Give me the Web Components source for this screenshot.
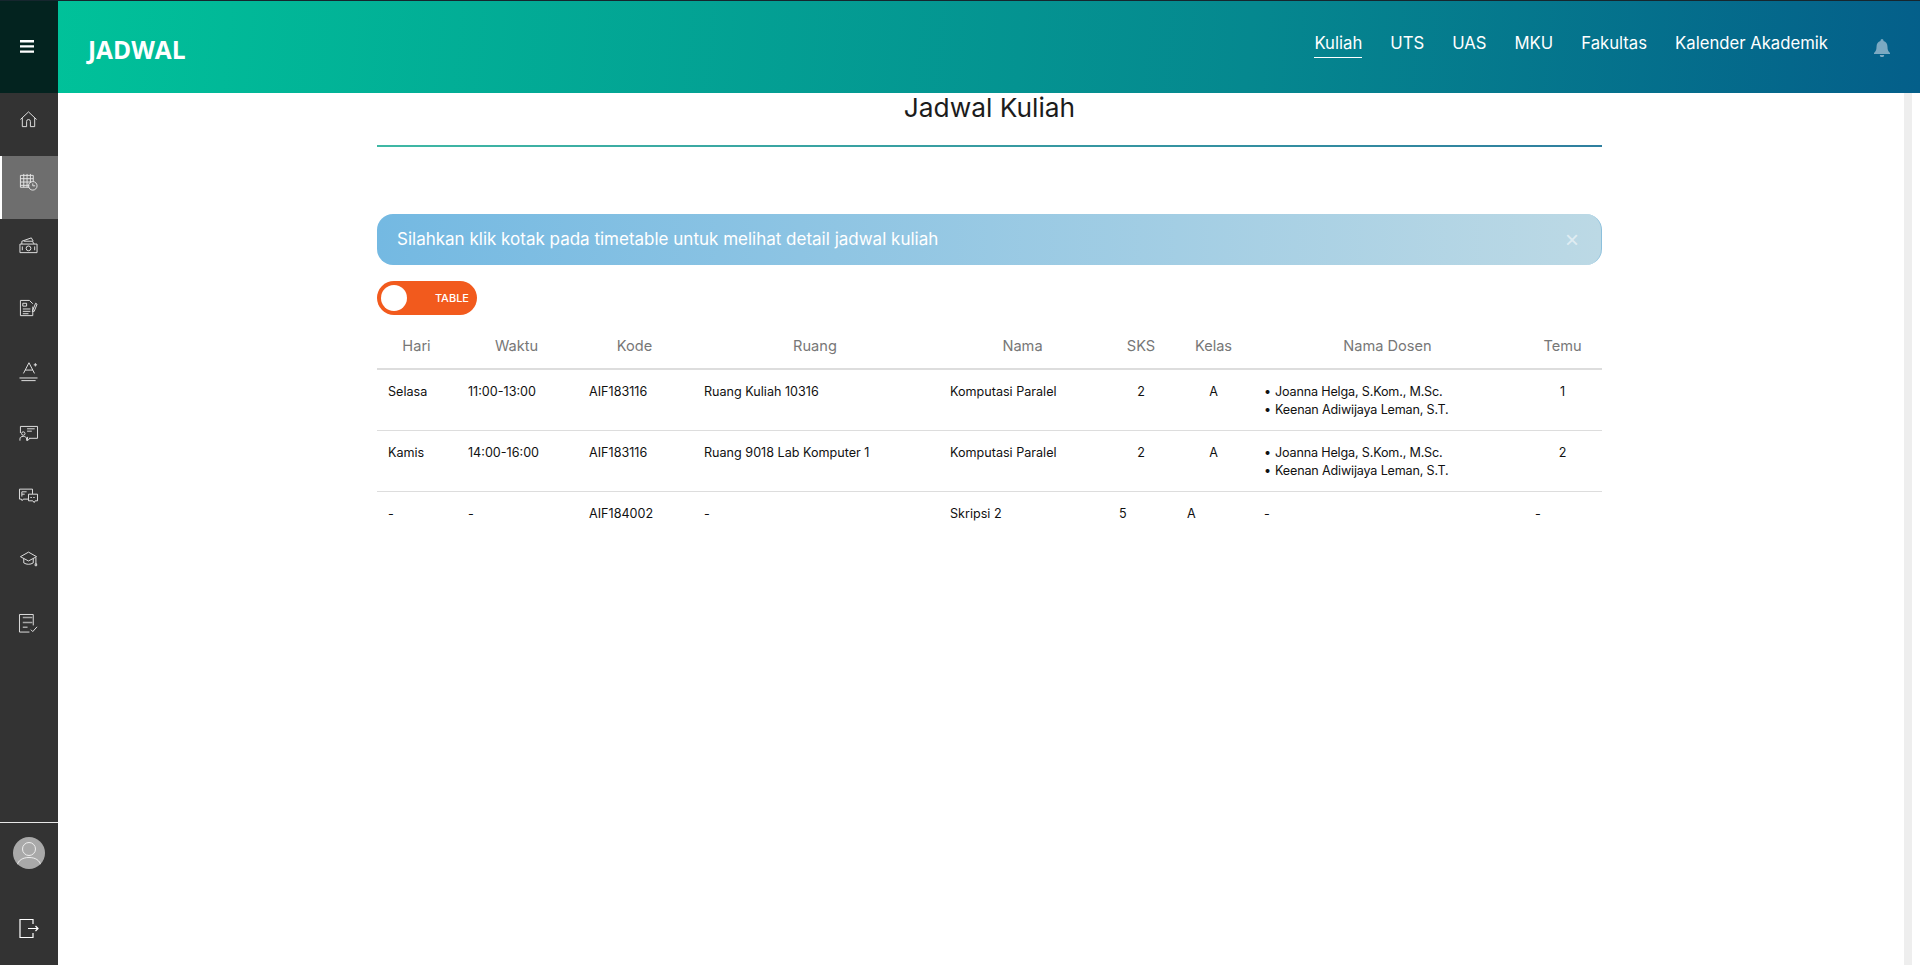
<!DOCTYPE html>
<html lang="id">
<head>
<meta charset="utf-8">
<title>Jadwal</title>
<style>
    html, body { margin: 0; height: 100%; overflow: hidden; background: #fff; }
    body { font-family: Inter, "Liberation Sans", sans-serif; }
</style>
</head>
<body>
<app-shell>
    <top-bar slot="top" heading="JADWAL"></top-bar>
    <side-nav slot="side"></side-nav>
    <page-title>Jadwal Kuliah</page-title>
    <alert-box>Silahkan klik kotak pada timetable untuk melihat detail jadwal kuliah</alert-box>
    <view-toggle>TABLE</view-toggle>
    <schedule-table></schedule-table>
</app-shell>

<script>
// Sidebar icons, all drawn on a 20x20 box
const ICONS = {
    home: '<path d="M1.500 10 10 2l8.500 8"/><path d="M3.500 8.500V17.500H8V12a2 2 0 0 1 4 0v5.500h4.500V8.500"/>',
    schedule: '<path d="M11 15H1.500V2.500H15V9"/><path d="M1.500 6H15M1.500 9.500H13M1.500 13H11M5 1v14M8.500 1v14M12 1v9"/><circle cx="14.500" cy="13.500" r="4.500"/><path d="M14.500 11v2.500h2.500"/>',
    money: '<path d="M1 8.500h18v9H1z"/><path d="M3 8.500V5.500L13 2l2 3.500M5 5.500l9 0 2 3"/><circle cx="10" cy="13" r="2.500"/><path d="M3.500 11v4M16.500 11v4"/>',
    grades: '<path d="M14.500 8v9.500H1.500V1.500H11l3.500 3.500"/><path d="M4 4.500h4v3H4zM4 10.500h8M4 13h8M4 15.500h6"/><path d="M14 13l3.500-8.500 1.500 1-3 7.500z"/>',
    score: '<path d="M4.700 12 10.500 .8 16.300 12M6.500 8.500h8"/><path d="M15.500 3h3.500M17.200 1.200v3.500"/><path d="M.5 16.800h19" stroke-opacity=".7" stroke-width="1.500"/><path d="M2.500 19.600h15"/>',
    teach: '<g transform="translate(0 -1.500)"><path d="M1.500 10V3H19.500V15.500H10.500"/><path d="M8.500 5.500h8M8.500 8h5"/><circle cx="4.500" cy="10.500" r="1.800"/><path d="M1 18v-1.800c0-2 1.500-2.700 3.500-2.700s3.500.7 3.500 2.700V18"/><path d="M9 14v4l2.500-2.500"/></g>',
    chat: '<g transform="translate(0 -2.500)"><path d="M9.500 14.200H4.500l-1.200 1.600-.8-1.600H.5V3.700h13.700v5"/><path d="M3 6.500h5M3 9h3M3 6.500v5"/><path d="M10 9h9.500v7h-2.500l-1 1.800-1.500-1.800H10z"/><path d="M12 12.500h1.500M15 12.500h1.500"/></g>',
    cap: '<g transform="translate(0 -2.500)"><path d="M10 3.700 1.500 8.500 10 13l8.500-4.500z"/><path d="M5 10.500v4.500c3 2 7 2 10 0v-4.500"/><path d="M17.800 9.500V16"/><path d="M17 16h1.600v2H17z"/></g>',
    report: '<path d="M15 12V.5H.5v18.500H11"/><path d="M4 3.700h10M4 9h10M4 14h5" stroke-width="1.600" stroke-opacity=".65"/><path d="M12.500 16.500l2 2 4.500-5"/>',
};

class NavItem extends HTMLElement {
    connectedCallback() {
        this.attachShadow({ mode: 'open' }).innerHTML = `
            <style>
                :host { display: flex; height: 63px; padding: 0 1px 10px 0; align-items: center; justify-content: center; box-sizing: border-box; }
                :host([active]) { background: #6e6e6e; border-left: 2px solid #fff; padding-right: 3px; }
                svg { width: 19px; height: 19px; fill: none; stroke: #e6e6e6; stroke-width: 1; overflow: visible; }
            </style>
            <svg viewBox="0 0 20 20">${ICONS[this.getAttribute('icon')]}</svg>
        `;
    }
}

class SideNav extends HTMLElement {
    connectedCallback() {
        const names = ['home', 'schedule', 'money', 'grades', 'score', 'teach', 'chat', 'cap', 'report'];
        const items = names.map(n => `<nav-item icon="${n}" ${n === 'schedule' ? 'active' : ''}></nav-item>`).join('');
        this.attachShadow({ mode: 'open' }).innerHTML = `
            <style>
                :host { display: flex; flex-direction: column; width: 58px; height: 100%; background: #333; }
                .items { flex: 1; }
                .bottom { border-top: 1px solid #e8e8e8; height: 143px; box-sizing: border-box; display: flex; flex-direction: column; align-items: center; padding-top: 14px; }
                .avatar { width: 32px; height: 32px; border-radius: 50%; background: #a9a9a9; overflow: hidden; }
                .avatar svg { display: block; width: 32px; height: 32px; fill: none; stroke: #eee; stroke-width: 1; }
                .logout { width: 20px; height: 19px; margin-top: 50px; fill: none; stroke: #fff; stroke-width: 1.200; }
            </style>
            <div class="items">${items}</div>
            <div class="bottom">
                <div class="avatar"><svg viewBox="0 0 32 32"><circle cx="16" cy="12" r="6.500"/><path d="M4 29c1-6 6-8.500 12-8.500S27 23 28 29"/></svg></div>
                <svg class="logout" viewBox="0 0 20 19"><path d="M14 5V.5H1v18h13v-4.500"/><path d="M9 9.500h10M16.500 7 19 9.500 16.500 12"/></svg>
            </div>
        `;
    }
}

class TopBar extends HTMLElement {
    connectedCallback() {
        const links = ['Kuliah', 'UTS', 'UAS', 'MKU', 'Fakultas', 'Kalender Akademik'];
        this.attachShadow({ mode: 'open' }).innerHTML = `
            <style>
                :host { display: flex; height: 93px; box-sizing: border-box; border-top: 1px solid #16262e; color: #fff; align-items: stretch;
                    background: linear-gradient(95deg, #00c49a 0%, #05888f 65%, #045f8a 100%); }
                .burger { width: 58px; background: #03231f; display: flex; align-items: center; justify-content: center; padding: 0 4px 2px 0; box-sizing: border-box; margin-right: 30px; }
                .burger svg { width: 14px; height: 13px; fill: #fff; }
                h1 { margin: 0; font: 700 24.500px "Open Sans", sans-serif; align-self: center; margin-top: 5px; flex: 1; }
                nav { display: flex; gap: 28px; align-self: flex-start; margin-top: 31px; font-size: 16.700px; }
                nav a { padding-bottom: 3px; line-height: 22px; border-bottom: 1px solid transparent; }
                nav a.on { border-bottom-color: #fff; }
                .bell { width: 16px; height: 18px; margin: 38px 30px 0 46px; fill: #7ba9c2; align-self: flex-start; }
            </style>
            <div class="burger"><svg viewBox="0 0 14 13"><path d="M0 0h14v2.400H0zM0 5.200h14v2.400H0zM0 10.400h14v2.400H0z"/></svg></div>
            <h1>${this.getAttribute('heading')}</h1>
            <nav>${links.map((l, i) => `<a class="${i === 0 ? 'on' : ''}">${l}</a>`).join('')}</nav>
            <svg class="bell" viewBox="0 0 16 18"><path d="M8 0a1.500 1.500 0 0 1 1.500 1.500v.6C12 2.800 13.500 5 13.500 8c0 3 .8 4.500 2.500 6v1H0v-1c1.700-1.500 2.500-3 2.500-6 0-3 1.500-5.200 4-5.900v-.6A1.500 1.500 0 0 1 8 0zM5.800 16h4.400a2.200 2.200 0 0 1-4.400 0z"/></svg>
        `;
    }
}

class PageTitle extends HTMLElement {
    connectedCallback() {
        this.attachShadow({ mode: 'open' }).innerHTML = `
            <style>
                :host { display: block; height: 51px; padding-top: 1px; border-bottom: 2px solid; border-image: linear-gradient(90deg, #3fb8a4, #2f7f9f) 1; text-align: center; font-size: 26.300px; line-height: 28px; color: #1c1c1c; }
            </style>
            <slot></slot>
        `;
    }
}

class AlertBox extends HTMLElement {
    connectedCallback() {
        this.attachShadow({ mode: 'open' }).innerHTML = `
            <style>
                :host { display: flex; align-items: center; justify-content: space-between; height: 51px; margin-top: 67px; padding: 0 22px 1px 20px; box-sizing: border-box; border-radius: 16px; border-right: 1px solid #8cc0dc;
                    color: #fff; font-size: 17px; background: linear-gradient(90deg, #74b9e2, #bcd9e5); }
                span { color: rgba(255,255,255,.55); font-size: 24px; line-height: 26px; margin-top: 2px; font-family: "Liberation Sans", sans-serif; }
            </style>
            <div><slot></slot></div><span>&times;</span>
        `;
    }
}

class ViewToggle extends HTMLElement {
    connectedCallback() {
        this.attachShadow({ mode: 'open' }).innerHTML = `
            <style>
                :host { display: flex; align-items: center; width: 100px; height: 34px; margin-top: 16px; padding: 0 8px 0 4px; box-sizing: border-box; border-radius: 17px; background: #f25a1d; color: #fff; font-size: 11px; font-weight: 500; }
                i { width: 26px; height: 26px; border-radius: 50%; background: #fff; margin-right: auto; }
            </style>
            <i></i><slot></slot>
        `;
    }
}

class ScheduleTable extends HTMLElement {
    connectedCallback() {
        const widths = [79, 121, 115, 246, 169, 68, 77, 271, 79];
        const heads = ['Hari', 'Waktu', 'Kode', 'Ruang', 'Nama', 'SKS', 'Kelas', 'Nama Dosen', 'Temu'];
        const dosen = '<ul><li>Joanna Helga, S.Kom., M.Sc.</li><li>Keenan Adiwijaya Leman, S.T.</li></ul>';
        const rows = [
            ['Selasa', '11:00-13:00', 'AIF183116', 'Ruang Kuliah 10316', 'Komputasi Paralel', '2', 'A', dosen, '1'],
            ['Kamis', '14:00-16:00', 'AIF183116', 'Ruang 9018 Lab Komputer 1', 'Komputasi Paralel', '2', 'A', dosen, '2'],
            ['-', '-', 'AIF184002', '-', 'Skripsi 2', '5', 'A', '-', '-'],
        ];
        const cell = (v, i, r) => {
            const center = r < 2 && (i === 5 || i === 6 || i === 8);
            return `<td class="${center ? 'c' : ''}">${v}</td>`;
        };
        this.attachShadow({ mode: 'open' }).innerHTML = `
            <style>
                :host { display: block; margin-top: 20px; }
                table { width: 100%; border-collapse: collapse; table-layout: fixed; }
                th { font-weight: 400; font-size: 14.600px; color: #777; height: 34px; padding: 0 0 12px; box-sizing: border-box; border-bottom: 2px solid #ddd; }
                td { height: 61px; box-sizing: border-box; padding: 13px 12px 0; vertical-align: top; font-size: 12.600px; line-height: 18px; color: #111; border-bottom: 1px solid #ddd; }
                td:first-child { padding-left: 11px; }
                tr:last-child td { border-bottom: none; }
                td.c { text-align: center; }
                ul { margin: 0; padding: 0; list-style: none; letter-spacing: -0.170px; }
                li::before { content: "\\2022"; display: inline-block; width: 11px; }
            </style>
            <table>
                <colgroup>${widths.map(w => `<col style="width:${w}px">`).join('')}</colgroup>
                <thead><tr>${heads.map(h => `<th>${h}</th>`).join('')}</tr></thead>
                <tbody>${rows.map((row, r) => `<tr>${row.map((v, i) => cell(v, i, r)).join('')}</tr>`).join('')}</tbody>
            </table>
        `;
    }
}

class AppShell extends HTMLElement {
    constructor() {
        super();
        this.attachShadow({ mode: 'open' }).innerHTML = `
            <style>
                :host { display: grid; grid-template: 93px 1fr / 58px 1fr 16px; height: 965px; }
                ::slotted([slot=top]) { grid-column: 1 / 4; }
                main { padding: 0 302px 0 319px; min-width: 0; }
                .track { width: 8px; background: #eee; }
            </style>
            <slot name="top"></slot>
            <slot name="side"></slot>
            <main><slot></slot></main>
            <div class="track"></div>
        `;
    }
}

customElements.define('nav-item', NavItem);
customElements.define('side-nav', SideNav);
customElements.define('top-bar', TopBar);
customElements.define('page-title', PageTitle);
customElements.define('alert-box', AlertBox);
customElements.define('view-toggle', ViewToggle);
customElements.define('schedule-table', ScheduleTable);
customElements.define('app-shell', AppShell);
</script>
</body>
</html>
